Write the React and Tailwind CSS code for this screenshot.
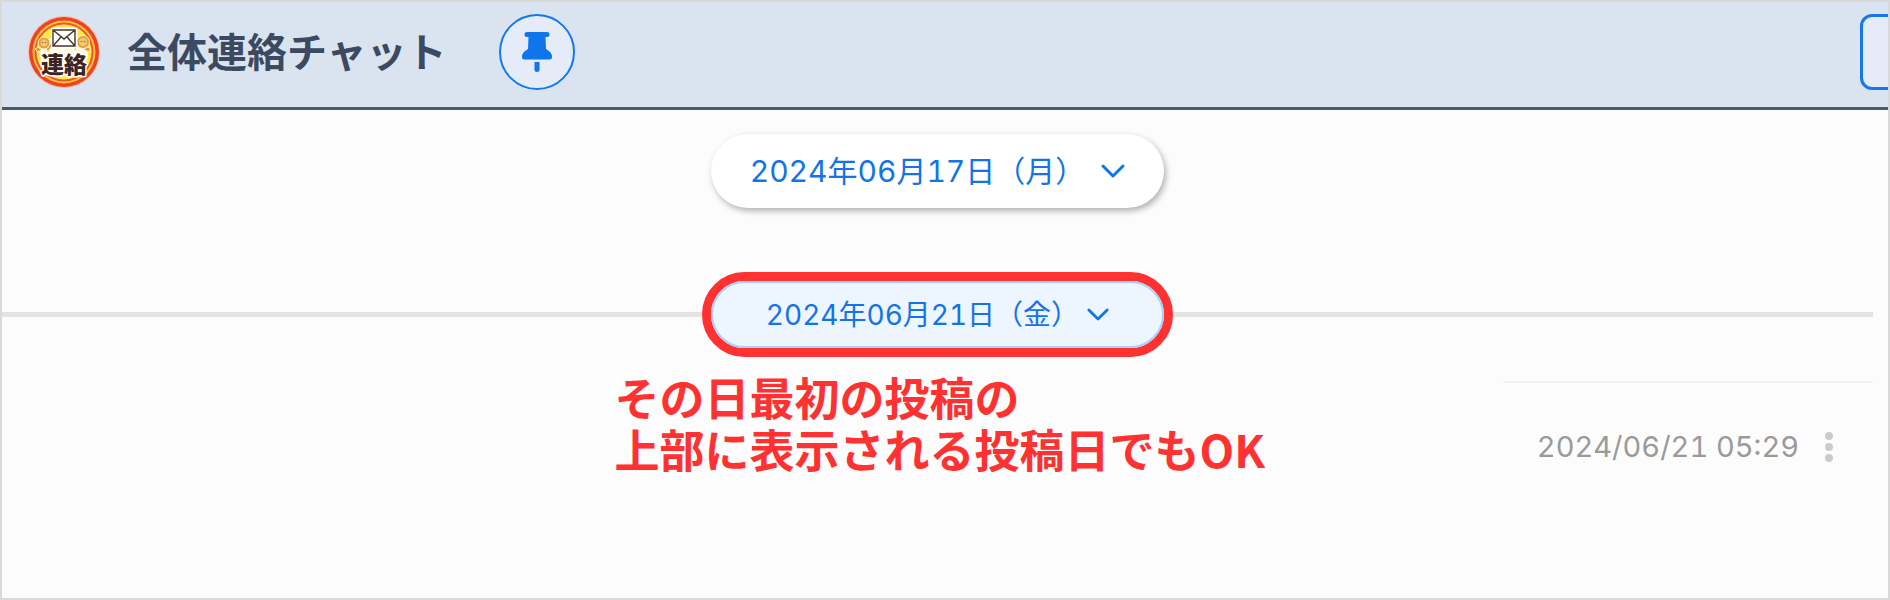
const dateFont = "font-['Inter','Noto_Sans_CJK_JP',sans-serif] tabular-nums";

function NoticeLogo() {
  return (
    <svg viewBox="0 0 72 72" className="size-18 shrink-0" role="img" aria-label="連絡">
      <circle cx="36" cy="36" r="36" fill="#f6b9a8" />
      <circle cx="36" cy="36" r="35" fill="#ee4323" />
      <circle cx="36" cy="36" r="31.5" fill="#fdc13c" />
      <circle cx="36" cy="36" r="29.5" fill="#f0552a" />
      <circle cx="36" cy="36" r="27.5" fill="#ffe94a" />
      <ellipse cx="36" cy="38" rx="24" ry="19" fill="#fffbe0" />
      {/* lion mascots */}
      <g fill="#e2a045" stroke="#fff3d0" strokeWidth="1">
        <path d="M10 31l-3 2 3 3 4-2zM18 33l5-6 1 3-4 6z" />
        <circle cx="16" cy="27" r="6" />
        <path d="M49 31l-4-4-1 2 4 6zM58 31l5 1-2 4-5-2z" />
        <circle cx="55" cy="26" r="6.5" />
      </g>
      <g fill="#f6c86c">
        <circle cx="16" cy="27" r="3.5" />
        <circle cx="55" cy="26" r="4" />
      </g>
      <g fill="#a8642a">
        <circle cx="14.5" cy="26.5" r="0.8" />
        <circle cx="17.5" cy="26.5" r="0.8" />
        <circle cx="53.5" cy="25.5" r="0.8" />
        <circle cx="56.5" cy="25.5" r="0.8" />
      </g>
      <rect x="25" y="13" width="23" height="18" fill="#fff" stroke="#fff" strokeWidth="3" />
      <path d="M25 14h22v16H25zL36 23 47 14M25 30l8-9M47 30l-8-9" fill="#fff" stroke="#4a3430" strokeWidth="1.4" />
      <text
        x="36"
        y="57"
        textAnchor="middle"
        className="font-['Noto_Sans_CJK_JP',sans-serif] text-[23px] font-black"
        fill="#3d2420"
        stroke="#fff"
        strokeWidth="3"
        strokeLinejoin="round"
        paintOrder="stroke"
      >
        連絡
      </text>
    </svg>
  );
}

function PinIcon() {
  return (
    <svg viewBox="0 0 30 40" className="h-10 w-[30px]" fill="#0f75ec" aria-hidden="true">
      <path d="M5 0h20q2.500 0 2.500 2.500T25 5h-1.500l.5 12q6 3 6 8 0 2.500-2.500 2.500h-25Q0 27.500 0 25q0-5 6-8L6.500 5H5Q2.500 5 2.500 2.500T5 0Z" />
      <path d="M12.500 30h5v7.500a2.500 2.500 0 0 1-5 0Z" />
    </svg>
  );
}

function ChevronIcon({ className }) {
  return (
    <svg viewBox="0 0 24 14" className={className} fill="none" stroke="#0f75ec" strokeWidth="3" strokeLinecap="round" strokeLinejoin="round" aria-hidden="true">
      <path d="M2 2l10 10L22 2" />
    </svg>
  );
}

function ChatHeader() {
  return (
    <header className="flex h-[108px] items-start overflow-hidden border-b-3 border-[#475870] bg-[#dae4f0] pt-3 pl-[26px]">
      <div className="flex h-[76px] items-center">
        <NoticeLogo />
        <h1 className="ml-[27px] pb-1 text-[40px] leading-none font-bold whitespace-nowrap text-[#3b4a61]">全体連絡チャット</h1>
      </div>
      <button type="button" aria-label="ピン留め" className="ml-[52px] flex size-[76px] shrink-0 items-center justify-center rounded-full border-2 border-[#1478ee] bg-[#e5ebf7]">
        <PinIcon />
      </button>
      <button type="button" aria-label="メニュー" className="-mr-16 ml-auto h-[76px] w-[92px] shrink-0 rounded-xl border-3 border-[#1478ee] bg-[#e5ebf7]" />
    </header>
  );
}

function PostMeta() {
  return (
    <div className="ml-auto w-[370px] border-t-2 border-[#f2f2f2]">
      <div className="flex items-center justify-end gap-[26px] pt-11 pr-10">
        <time dateTime="2024-06-21T05:29" className={`${dateFont} text-[29px] leading-10 whitespace-nowrap text-[#9a9a9a]`}>
          2024/06/21 05:29
        </time>
        <button type="button" aria-label="投稿メニュー" className="flex w-2 flex-col gap-[3px]">
          <span className="size-2 rounded-full bg-[#cbcbcb]" />
          <span className="size-2 rounded-full bg-[#cbcbcb]" />
          <span className="size-2 rounded-full bg-[#cbcbcb]" />
        </button>
      </div>
    </div>
  );
}

export default function App() {
  return (
    <div className="flex min-h-screen flex-col overflow-hidden border-2 border-[#d9d9d9] bg-[#fcfcfc] font-['Noto_Sans_CJK_JP',sans-serif]">
      <ChatHeader />
      <main className="pt-6 pr-[15px]">
        <div className="flex justify-center">
          <button
            type="button"
            className={`${dateFont} flex h-[74px] w-[453px] items-center justify-center gap-4 rounded-full bg-white text-[30px] whitespace-nowrap text-[#1274e8] shadow-[2px_3px_6px_rgba(0,0,0,0.3)]`}
          >
            2024年06月17日（月）
            <ChevronIcon className="h-[14px] w-6" />
          </button>
        </div>

        <div className="mt-16 flex items-center">
          <span className="h-[5px] flex-1 bg-[#e3e3e3]" />
          <div className="rounded-full border-9 border-[#ff3131] bg-white">
            <button
              type="button"
              className={`${dateFont} flex h-[67px] w-[453px] items-center justify-center gap-2 rounded-full border-2 border-[#a9d0fb] bg-[#edf5ff] text-[28px] whitespace-nowrap text-[#1274e8]`}
            >
              2024年06月21日（金）
              <ChevronIcon className="h-[13px] w-[22px]" />
            </button>
          </div>
          <span className="h-[5px] flex-1 bg-[#e3e3e3]" />
        </div>

        <div className="grid grid-cols-[1fr_646px_1fr] pt-[14px]">
          <p className="col-start-2 text-[45px] leading-[52px] font-bold whitespace-nowrap text-[#ff3131]">
            その日最初の投稿の
            <br />
            上部に表示される投稿日でもOK
          </p>
          <div className="pt-[10px]">
            <PostMeta />
          </div>
        </div>
      </main>
    </div>
  );
}
